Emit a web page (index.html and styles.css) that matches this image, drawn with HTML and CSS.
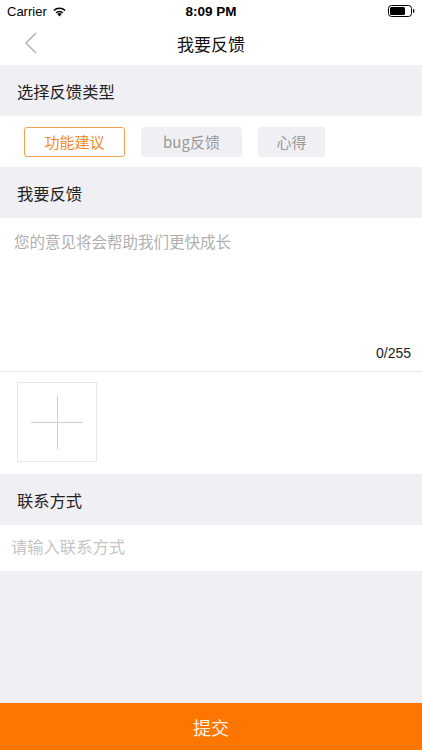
FILE: index.html
```html
<!DOCTYPE html>
<html lang="zh">
<head>
    <meta charset="UTF-8">
    <meta name="viewport" content="width=device-width, initial-scale=1.0">
    <title>我要反馈</title>
    <link rel="stylesheet" href="styles.css">
</head>
<body>

<div class="page">
    <!-- 状态栏 -->
    <div class="status-bar">
        <div class="status-left">
            Carrier
            <svg class="wifi" width="15" height="11" viewBox="0 0 15 11">
                <path d="M7.5 10.5 L5.3 8.1 A3.2 3.2 0 0 1 9.7 8.1 Z" fill="#000"/>
                <path d="M3.6 6.3 A5.6 5.6 0 0 1 11.4 6.3 L10.3 7.5 A4 4 0 0 0 4.7 7.5 Z" fill="#000"/>
                <path d="M1.3 3.9 A9 9 0 0 1 13.7 3.9 L12.6 5.1 A7.4 7.4 0 0 0 2.4 5.1 Z" fill="#000"/>
            </svg>
        </div>
        <div class="status-time">8:09 PM</div>
        <div class="status-right">
            <svg width="27" height="12" viewBox="0 0 27 12">
                <rect x="0.5" y="0.5" width="23" height="11" rx="3" fill="none" stroke="#000" stroke-width="1"/>
                <rect x="2" y="2" width="15" height="8" rx="1.5" fill="#000"/>
                <path d="M25 4 Q26.5 4 26.5 6 Q26.5 8 25 8 Z" fill="#000"/>
            </svg>
        </div>
    </div>

    <!-- 导航栏 -->
    <div class="nav-bar">
        <svg class="back" width="14" height="22" viewBox="0 0 14 22">
            <path d="M12 1 L2 11 L12 21" fill="none" stroke="#b5b5b5" stroke-width="1.6"/>
        </svg>
        <div class="nav-title">我要反馈</div>
    </div>

    <div class="section-title">选择反馈类型</div>
    <div class="type-row">
        <span class="type-btn active">功能建议</span>
        <span class="type-btn">bug反馈</span>
        <span class="type-btn small">心得</span>
    </div>

    <div class="section-title">我要反馈</div>
    <div class="feedback-box">
        <div class="placeholder">您的意见将会帮助我们更快成长</div>
        <div class="counter">0/255</div>
    </div>
    <div class="image-row">
        <div class="add-image"><span class="plus-h"></span><span class="plus-v"></span></div>
    </div>

    <div class="section-title">联系方式</div>
    <div class="contact-input">请输入联系方式</div>

    <div class="spacer"></div>
    <div class="submit-btn">提交</div>
</div>

</body>
</html>
```

FILE: styles.css
```css
* {
    box-sizing: border-box;
}
body {
    margin: 0;
    font-family: "Noto Sans CJK SC", "Liberation Sans", sans-serif;
    background-color: #efeff4;
}
.page {
    width: 422px;
    height: 750px;
    display: flex;
    flex-direction: column;
    background-color: #efeff4;
}
.status-bar {
    height: 22px;
    background-color: white;
    display: flex;
    align-items: center;
    justify-content: space-between;
    padding: 0 7px;
    font-family: "Liberation Sans", sans-serif;
    font-size: 13px;
    color: #000;
}
.status-left {
    width: 100px;
    display: flex;
    align-items: center;
    gap: 5px;
}
.status-time {
    font-weight: bold;
    font-size: 13.5px;
}
.status-right {
    width: 100px;
    display: flex;
    justify-content: flex-end;
}
.nav-bar {
    height: 43px;
    background-color: white;
    display: flex;
    align-items: center;
    justify-content: center;
    position: relative;
}
.back {
    position: absolute;
    left: 24px;
    top: 10px;
}
.nav-title {
    font-size: 17px;
    color: #111;
}
.section-title {
    height: 51px;
    display: flex;
    align-items: center;
    padding-left: 17px;
    font-size: 16.3px;
    color: #222;
    background-color: #efeff4;
}
.type-row {
    height: 51px;
    background-color: white;
    display: flex;
    align-items: center;
    padding-left: 24px;
    gap: 16px;
}
.type-btn {
    width: 101px;
    height: 30px;
    display: flex;
    align-items: center;
    justify-content: center;
    font-size: 15px;
    color: #999;
    background-color: #f0f0f4;
    border-radius: 3px;
}
.type-btn.small {
    width: 67px;
}
.type-btn.active {
    color: #f28a2c;
    background-color: white;
    border: 1px solid #f5a04e;
}
.feedback-box {
    height: 154px;
    background-color: white;
    border-bottom: 1px solid #e8e8e8;
    padding: 12px 11px 0 14px;
    position: relative;
}
.placeholder {
    font-size: 15.5px;
    color: #b0b0b0;
}
.counter {
    position: absolute;
    right: 11px;
    bottom: 10px;
    font-family: "Liberation Sans", sans-serif;
    font-size: 14px;
    color: #222;
}
.image-row {
    height: 102px;
    background-color: white;
    padding: 10px 0 0 17px;
}
.add-image {
    width: 80px;
    height: 80px;
    border: 1px solid #e6e6e6;
    position: relative;
}
.plus-h {
    position: absolute;
    left: 13px;
    top: 39px;
    width: 52px;
    height: 1px;
    background-color: #cfcfcf;
}
.plus-v {
    position: absolute;
    left: 39px;
    top: 13px;
    width: 1px;
    height: 53px;
    background-color: #cfcfcf;
}
.contact-input {
    height: 46px;
    background-color: white;
    display: flex;
    align-items: center;
    padding: 0 0 4px 11px;
    font-size: 16.3px;
    color: #c4c4c4;
}
.spacer {
    flex: 1;
}
.submit-btn {
    height: 47px;
    background-color: #fc7601;
    color: #fff3e6;
    font-size: 18px;
    display: flex;
    align-items: center;
    justify-content: center;
}
```
